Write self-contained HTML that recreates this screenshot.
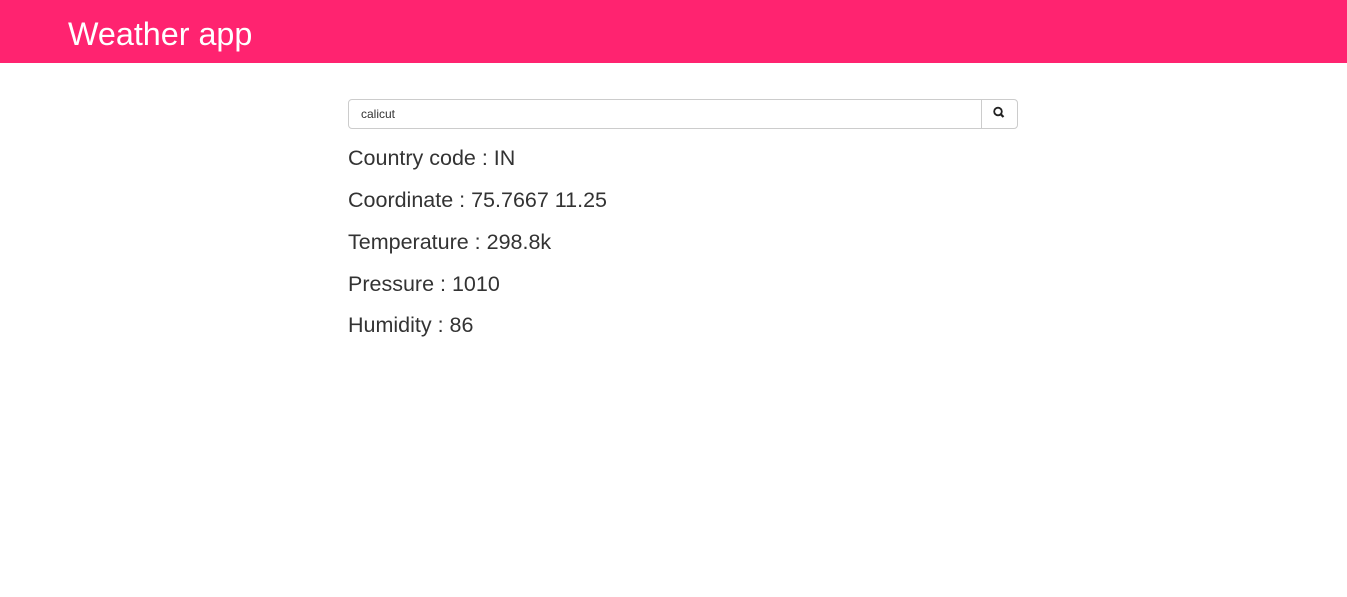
<!DOCTYPE html>
<html><head><style>
body{margin:0;font-family:"Liberation Sans",sans-serif;background:#fff;color:#333}
.hdr{height:63px;background:#ff2370;position:relative}
.hdr span{position:absolute;left:68px;top:16px;font-size:32.3px;color:#fff}
.box{position:absolute;left:348px;top:99px;width:670px;height:30px}
.inp{position:absolute;left:0;top:0;height:28px;border:1px solid #ccc;border-radius:4px 0 0 4px;font-size:12px;line-height:28px;padding-left:12px;width:620px}
.btn{position:absolute;left:633px;top:0;width:35px;height:28px;border:1px solid #ccc;border-radius:0 4px 4px 0}
.l{position:absolute;left:348px;font-size:21.5px}
</style></head><body>
<div class="hdr"><span>Weather app</span></div>
<div class="box"><div class="inp">calicut</div><div class="btn">
<svg width="35" height="28" viewBox="0 0 35 28"><circle cx="16" cy="11.5" r="3.8" fill="none" stroke="#222" stroke-width="1.8"/><line x1="18.8" y1="14.3" x2="21.5" y2="17" stroke="#222" stroke-width="2.2"/></svg></div></div>
<div class="l" style="top:146px">Country code : IN</div>
<div class="l" style="top:188px">Coordinate : 75.7667 11.25</div>
<div class="l" style="top:230px">Temperature : 298.8k</div>
<div class="l" style="top:272px">Pressure : 1010</div>
<div class="l" style="top:313px">Humidity : 86</div>
</body></html>
